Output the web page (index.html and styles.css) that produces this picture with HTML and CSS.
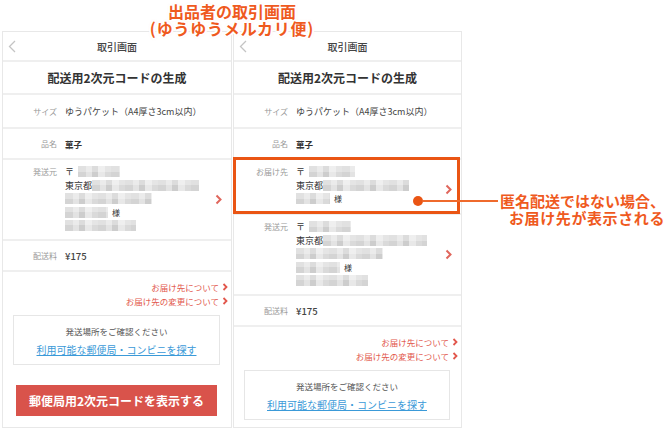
FILE: index.html
```html
<!DOCTYPE html>
<html lang="ja">
<head>
  <meta charset="UTF-8" />
  <meta name="viewport" content="width=device-width, initial-scale=1.0" />
  <title>出品者の取引画面</title>
  <link rel="stylesheet" href="styles.css">
</head>
<body>
  <div class="stage">
    <div class="caption">出品者の取引画面<br><span class="sub">(ゆうゆうメルカリ便)</span></div>

    <div class="screens">
      <!-- anonymous shipping -->
      <section class="screen">
        <div class="topbar">
          <svg class="back" width="8" height="13" viewBox="0 0 8 13"><polyline points="7,1 1.5,6.5 7,12" fill="none" stroke="#c4c4c4" stroke-width="1.3"/></svg>
          <span class="topbar-title">取引画面</span>
        </div>
        <h2 class="heading">配送用2次元コードの生成</h2>
        <div class="row row-size"><span class="label">サイズ</span><span class="value">ゆうパケット（A4厚さ3cm以内）</span></div>
        <div class="row row-item"><span class="label">品名</span><span class="value strong">菓子</span></div>
        <div class="row row-address">
          <span class="label">発送元</span>
          <div class="address">
            <div class="line">〒<span class="blur w42"></span></div>
            <div class="line">東京都<span class="blur w107"></span></div>
            <div class="line"><span class="blur w87"></span></div>
            <div class="line"><span class="blur w43"></span><span class="sama">様</span></div>
            <div class="line"><span class="blur w71"></span></div>
          </div>
          <svg class="chev" width="7" height="11" viewBox="0 0 7 11"><polyline points="1.5,1.5 5.5,5.5 1.5,9.5" fill="none" stroke="#e0665c" stroke-width="2"/></svg>
        </div>
        <div class="row row-fee"><span class="label">配送料</span><span class="value price">¥175</span></div>
        <div class="bottom">
          <div class="links">
            <a class="help">お届け先について<svg width="6" height="8" viewBox="0 0 6 8"><polyline points="1.5,1 4.5,4 1.5,7" fill="none" stroke="#e2574c" stroke-width="1.8"/></svg></a>
            <a class="help">お届け先の変更について<svg width="6" height="8" viewBox="0 0 6 8"><polyline points="1.5,1 4.5,4 1.5,7" fill="none" stroke="#e2574c" stroke-width="1.8"/></svg></a>
          </div>
          <div class="place">
            <p>発送場所をご確認ください</p>
            <a class="place-link">利用可能な郵便局・コンビニを探す</a>
          </div>
          <button class="button">郵便局用2次元コードを表示する</button>
        </div>
      </section>

      <!-- not anonymous -->
      <section class="screen screen-right">
        <div class="topbar">
          <svg class="back" width="8" height="13" viewBox="0 0 8 13"><polyline points="7,1 1.5,6.5 7,12" fill="none" stroke="#c4c4c4" stroke-width="1.3"/></svg>
          <span class="topbar-title">取引画面</span>
        </div>
        <h2 class="heading">配送用2次元コードの生成</h2>
        <div class="row row-size"><span class="label">サイズ</span><span class="value">ゆうパケット（A4厚さ3cm以内）</span></div>
        <div class="row row-item"><span class="label">品名</span><span class="value strong">菓子</span></div>
        <div class="row row-dest highlight">
          <span class="label">お届け先</span>
          <div class="address">
            <div class="line">〒<span class="blur w46"></span></div>
            <div class="line">東京都<span class="blur w86"></span></div>
            <div class="line"><span class="blur w34"></span><span class="sama">様</span></div>
          </div>
          <svg class="chev" width="7" height="11" viewBox="0 0 7 11"><polyline points="1.5,1.5 5.5,5.5 1.5,9.5" fill="none" stroke="#e0665c" stroke-width="2"/></svg>
        </div>
        <div class="row row-address">
          <span class="label">発送元</span>
          <div class="address">
            <div class="line">〒<span class="blur w42"></span></div>
            <div class="line">東京都<span class="blur w104"></span></div>
            <div class="line"><span class="blur w87"></span></div>
            <div class="line"><span class="blur w44"></span><span class="sama">様</span></div>
            <div class="line"><span class="blur w72"></span></div>
          </div>
          <svg class="chev" width="7" height="11" viewBox="0 0 7 11"><polyline points="1.5,1.5 5.5,5.5 1.5,9.5" fill="none" stroke="#e0665c" stroke-width="2"/></svg>
        </div>
        <div class="row row-fee"><span class="label">配送料</span><span class="value price">¥175</span></div>
        <div class="bottom">
          <div class="links">
            <a class="help">お届け先について<svg width="6" height="8" viewBox="0 0 6 8"><polyline points="1.5,1 4.5,4 1.5,7" fill="none" stroke="#e2574c" stroke-width="1.8"/></svg></a>
            <a class="help">お届け先の変更について<svg width="6" height="8" viewBox="0 0 6 8"><polyline points="1.5,1 4.5,4 1.5,7" fill="none" stroke="#e2574c" stroke-width="1.8"/></svg></a>
          </div>
          <div class="place">
            <p>発送場所をご確認ください</p>
            <a class="place-link">利用可能な郵便局・コンビニを探す</a>
          </div>
        </div>
      </section>
    </div>

    <div class="callout">
      <span class="dot"></span>
      <span class="leader"></span>
      <p class="callout-text">匿名配送ではない場合、<br><span class="wide">お届け先が表示される</span></p>
    </div>
  </div>
</body>
</html>
```

FILE: styles.css
```css
* {
  box-sizing: border-box;
}
body {
  margin: 0;
  background: #fff;
  font-family: "Noto Sans CJK JP", "Noto Sans", sans-serif;
  color: #333;
}
.stage {
  position: relative;
  width: 672px;
  height: 431px;
  overflow: hidden;
}
.caption {
  position: absolute;
  left: 0;
  top: 3px;
  width: 464px;
  z-index: 2;
  text-align: center;
  font-size: 16px;
  line-height: 17px;
  font-weight: 700;
  color: #ef5a1e;
  text-shadow:
    2px 0 #fff, -2px 0 #fff, 0 2px #fff, 0 -2px #fff,
    1.4px 1.4px #fff, -1.4px 1.4px #fff, 1.4px -1.4px #fff, -1.4px -1.4px #fff,
    0 0 3px rgba(239,90,30,0.35);
}
.caption .sub {
  letter-spacing: 0.8px;
}
.screens {
  display: flex;
  align-items: flex-start;
  gap: 1px;
  padding: 31px 0 0 2px;
}
.screen {
  width: 230px;
  background: #fff;
  border: 1px solid #e8e8e8;
}
.screen-right {
  width: 229px;
}
.topbar {
  display: grid;
  grid-template-columns: 30px 1fr 30px;
  align-items: center;
  height: 30px;
  border-bottom: 2px solid #efefef;
}
.back {
  margin-left: 5px;
}
.topbar-title {
  text-align: center;
  font-size: 10px;
  font-weight: 500;
  color: #444;
}
.heading {
  margin: 0;
  height: 33px;
  display: flex;
  align-items: center;
  justify-content: center;
  font-size: 12px;
  font-weight: 700;
  color: #333;
  border-bottom: 2px solid #efefef;
}
.row {
  display: flex;
  align-items: center;
  border-bottom: 2px solid #efefef;
}
.row-size {
  height: 34px;
}
.row-item,
.row-fee {
  height: 31px;
}
.label {
  width: 54px;
  flex: none;
  margin-right: 8px;
  text-align: right;
  font-size: 8px;
  color: #999;
}
.value {
  font-size: 9px;
  color: #444;
}
.value.strong {
  font-size: 8.5px;
  font-weight: 700;
  color: #333;
}
.value.price {
  font-size: 9.5px;
  font-weight: 500;
  color: #444;
}
.row-address,
.row-dest {
  align-items: flex-start;
  padding-top: 5px;
}
.row-address {
  height: 81px;
}
.row-dest {
  height: 55px;
}
.row-address .label,
.row-dest .label {
  line-height: 13.5px;
}
.address {
  font-size: 9px;
  line-height: 13.5px;
  color: #333;
}
.line {
  display: flex;
  align-items: center;
  height: 13.5px;
}
.blur {
  display: inline-block;
  height: 11px;
  background:
    linear-gradient(180deg, rgba(255,255,255,0.3) 0 50%, transparent 50%),
    repeating-linear-gradient(90deg, #d4d4d4 0 8px, #e3e3e3 8px 14px, #cdcdcd 14px 20px, #e8e8e8 20px 27px, #dadada 27px 33px);
}
.w34 { width: 34px; }
.w42 { width: 42px; }
.w43 { width: 43px; }
.w44 { width: 44px; }
.w46 { width: 46px; }
.w71 { width: 71px; }
.w72 { width: 72px; }
.w86 { width: 86px; }
.w87 { width: 87px; }
.w104 { width: 104px; }
.w107 { width: 107px; }
.line:first-child .blur {
  margin-left: 4px;
}
.sama {
  margin-left: 4px;
  font-size: 8px;
}
.chev {
  margin-left: auto;
  margin-right: 9px;
  align-self: center;
}
.row-address .chev {
  margin-top: -6px;
}
.highlight {
  position: relative;
}
.highlight::after {
  content: "";
  position: absolute;
  left: -1px;
  right: 1px;
  top: -3px;
  bottom: -1px;
  border: 3px solid #ea5514;
}
.bottom {
  padding: 8px 0 11px 0;
}
.screen-right .bottom {
  padding-bottom: 7px;
}
.links {
  display: flex;
  flex-direction: column;
  align-items: flex-end;
  padding-right: 3px;
}
.help {
  display: flex;
  align-items: center;
  gap: 3px;
  font-size: 8.5px;
  line-height: 14px;
  color: #e2574c;
}
.place {
  margin: 7px 11px 0 10px;
  border: 1px solid #e6e6e6;
  padding: 8px 0 7px 0;
  text-align: center;
}
.place p {
  margin: 0;
  font-size: 8.5px;
  line-height: 14px;
  color: #555;
}
.place-link {
  display: block;
  margin-top: 5px;
  font-size: 10px;
  line-height: 14px;
  color: #3b9ad8;
  text-decoration: underline;
}
.button {
  display: block;
  width: 201px;
  height: 31px;
  margin: 20px 0 0 13px;
  background: #d9534b;
  color: #fff;
  border: none;
  font-family: inherit;
  font-size: 12px;
  font-weight: 700;
}
.callout {
  position: absolute;
  left: 413px;
  top: 192px;
  display: flex;
  align-items: flex-start;
}
.dot {
  width: 10px;
  height: 10px;
  margin-top: 3.5px;
  border-radius: 50%;
  background: #ea5514;
}
.leader {
  width: 75px;
  height: 2px;
  margin-top: 7.5px;
  background: #ef6a2c;
}
.callout-text {
  margin: 0;
  width: 167px;
  text-align: right;
  font-size: 15px;
  line-height: 17px;
  font-weight: 700;
  color: #ef5a1e;
}
.callout-text .wide {
  letter-spacing: 0.6px;
}
```
